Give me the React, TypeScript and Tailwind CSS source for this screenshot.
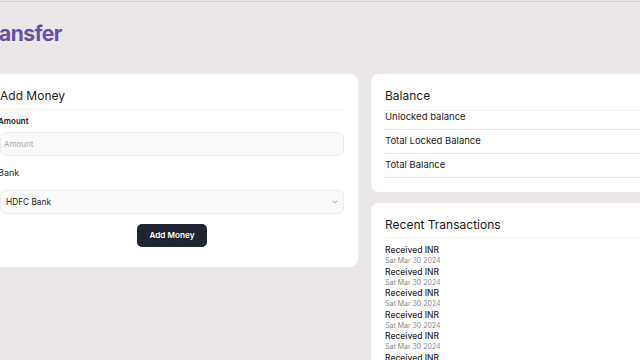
import { ChevronDown } from "lucide-react";

const transactions = Array.from({ length: 8 }, () => ({
  label: "Received INR",
  date: "Sat Mar 30 2024",
}));

const balanceRows = ["Unlocked balance", "Total Locked Balance", "Total Balance"];

const App = () => {
  return (
    <div
      className="h-[360px] w-[640px] overflow-hidden bg-[#ebe6e8] text-[#1c1c1c]"
      style={{ fontFamily: "Inter, 'Noto Sans', sans-serif" }}
    >
      <div className="mt-px h-px bg-[#d8d3d6]" />
      <div className="-ml-[14px]">
        <h1 className="ml-[-7px] mt-[16px] text-[21px] font-bold leading-[32px] tracking-tight text-[#6a51a6]">
          Transfer
        </h1>

        <div className="mt-[24px] grid grid-cols-[372px_372px] items-start gap-[13px]">
          {/* Add money card */}
          <section className="rounded-[8px] bg-white px-[14px] pb-[20px] pt-[12px]">
            <h2 className="border-b border-[#f1f1f1] pb-[3px] text-[12px] leading-[20px]">
              Add Money
            </h2>
            <label className="-ml-[2px] mt-[5px] block text-[8px] font-semibold leading-[12px]">
              Amount
            </label>
            <input
              placeholder="Amount"
              className="mt-[5px] block h-[24px] w-full rounded-[6px] border border-[#ececec] bg-[#fafafa] px-[3px] text-[8px] placeholder:text-[#a8a8a8]"
            />
            <label className="-ml-[2px] mt-[9px] block text-[9px] leading-[16px]">Bank</label>
            <div className="mt-[9px] flex h-[24px] items-center justify-between rounded-[6px] border border-[#ececec] bg-[#fafafa] pl-[5px] pr-[4px] text-[8.3px]">
              <span>HDFC Bank</span>
              <ChevronDown className="size-[8px] text-[#777]" strokeWidth={2} />
            </div>
            <div className="mt-[10px] flex justify-center">
              <button className="h-[23px] rounded-[5px] bg-[#1f2430] px-[12px] text-[8.2px] font-semibold text-white">
                Add Money
              </button>
            </div>
          </section>

          <div className="flex flex-col gap-[11px]">
            {/* Balance card */}
            <section className="rounded-[8px] bg-white px-[14px] pb-[14px] pt-[12px]">
              <h2 className="border-b border-[#f1f1f1] pb-[4px] text-[12px] leading-[20px]">
                Balance
              </h2>
              {balanceRows.map((row, i) => (
                <div
                  key={row}
                  className={`border-b border-[#e9e9e9] pb-[6px] text-[9.5px] leading-[12px] ${i === 0 ? "pt-0" : "pt-[5px]"}`}
                >
                  {row}
                </div>
              ))}
            </section>

            {/* Recent transactions */}
            <section className="h-[200px] rounded-[8px] bg-white px-[14px] pt-[12px]">
              <h2 className="border-b border-[#f1f1f1] pb-[2px] text-[12px] leading-[20px]">
                Recent Transactions
              </h2>
              <div className="mt-[6px]">
                {transactions.map((t, i) => (
                  <div key={i}>
                    <div className="text-[8.5px] font-medium leading-[12px] text-[#2a2a2a]">
                      {t.label}
                    </div>
                    <div className="text-[7px] leading-[9.5px] text-[#8a8a8a]">{t.date}</div>
                  </div>
                ))}
              </div>
            </section>
          </div>
        </div>
      </div>
    </div>
  );
};

export default App;
